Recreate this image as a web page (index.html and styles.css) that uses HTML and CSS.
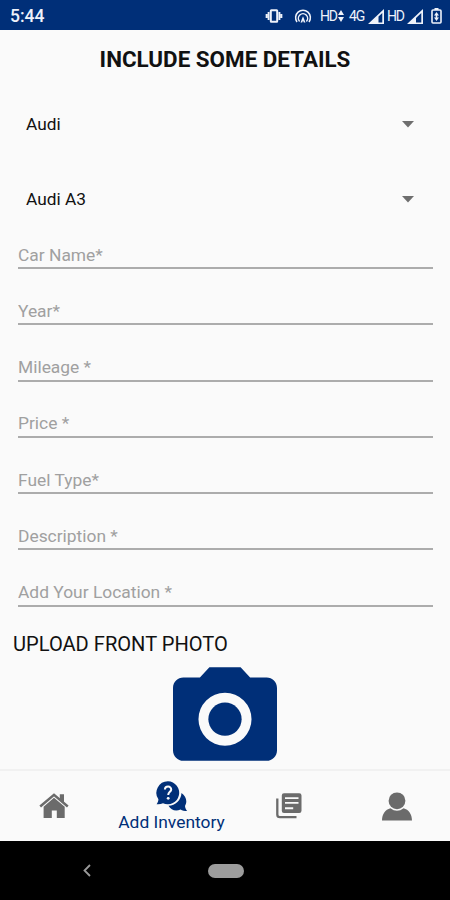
FILE: index.html
```html
<!DOCTYPE html>
<html lang="en">
<head>
    <meta charset="UTF-8">
    <meta name="viewport" content="width=device-width, initial-scale=1.0">
    <title>Add Inventory</title>
    <link rel="stylesheet" href="styles.css">
</head>
<body>

<header class="status-bar">
    <span class="clock">5:44</span>
    <div class="status-icons">
        <svg class="vibrate" width="18" height="14" viewBox="0 0 18 14">
            <rect x="5.8" y="1.2" width="6.4" height="11.6" rx=".5" fill="none" stroke="currentColor" stroke-width="2"/>
            <path d="M3.6 3v8M14.4 3v8M1.6 5v4M16.4 5v4" stroke="currentColor" stroke-width="1.9"/>
        </svg>
        <svg class="hotspot" width="18" height="15" viewBox="0 0 18 15">
            <g fill="none" stroke="currentColor" stroke-width="1.5">
                <path d="M3 13A7.4 7.4 0 1 1 15 13"/>
                <path d="M5.6 12.4A4.6 4.6 0 1 1 12.4 12.4"/>
            </g>
            <path d="M9 7.2L11.5 13.5H9.8L9 11.5L8.2 13.5H6.5z" fill="currentColor"/>
        </svg>
        <span class="hd">HD</span>
        <svg class="data" width="6" height="12" viewBox="0 0 6 12">
            <path d="M3 0L6 5H0zM3 12L0 7H6z" fill="currentColor"/>
        </svg>
        <span class="net">4G</span>
        <svg class="signal" width="16" height="15" viewBox="0 0 16 15">
            <path fill-rule="evenodd" d="M16 0V15H0zM14.3 4L10.5 7.6V13.4H14.3z" fill="currentColor"/>
        </svg>
        <span class="hd hd-second">HD</span>
        <svg class="signal-second" width="16" height="15" viewBox="0 0 16 15">
            <path fill-rule="evenodd" d="M16 0V15H0zM14.3 4L9 9V13.4H14.3z" fill="currentColor"/>
        </svg>
        <svg class="battery" width="11" height="16" viewBox="0 0 11 16">
            <path d="M3.5 0h4v2h-4z" fill="currentColor"/>
            <rect x="1" y="2" width="9" height="13" rx="1" fill="none" stroke="currentColor" stroke-width="1.6"/>
            <path d="M5.5 4L8 7.5H3zM5.5 13L3 9.5H8zM4.7 6h1.6v5H4.7z" fill="currentColor"/>
        </svg>
    </div>
</header>

<main>
    <h1>INCLUDE SOME DETAILS</h1>

    <form>
        <div class="select-row">
            <span>Audi</span>
            <svg width="12" height="7" viewBox="0 0 12 7"><path d="M0 0H12L6 6.5z" fill="currentColor"/></svg>
        </div>
        <div class="select-row">
            <span>Audi A3</span>
            <svg width="12" height="7" viewBox="0 0 12 7"><path d="M0 0H12L6 6.5z" fill="currentColor"/></svg>
        </div>

        <div class="fields">
            <input type="text" placeholder="Car Name*">
            <input type="text" placeholder="Year*">
            <input type="text" placeholder="Mileage *">
            <input type="text" placeholder="Price *">
            <input type="text" placeholder="Fuel Type*">
            <input type="text" placeholder="Description *">
            <input type="text" placeholder="Add Your Location *">
        </div>

        <h2>UPLOAD FRONT PHOTO</h2>
        <svg class="camera" viewBox="2 2 20 18">
            <path fill-rule="evenodd" d="M9 2L7.17 4H4c-1.1 0-2 .9-2 2v12c0 1.1.9 2 2 2h16c1.1 0 2-.9 2-2V6c0-1.1-.9-2-2-2h-3.17L15 2H9zm3 15.1a5.1 5.1 0 1 1 0-10.2 5.1 5.1 0 0 1 0 10.2z" fill="currentColor"/>
            <circle cx="12" cy="12" r="3.2" fill="currentColor"/>
        </svg>
    </form>
</main>

<nav class="tab-bar">
    <a class="tab">
        <svg width="30" height="26" viewBox="0 0 30 26">
            <path d="M20.8 1.3H25V10L20.8 6.4z" fill="currentColor"/>
            <path d="M1.2 13.5L15 1.9L28.8 13.5" fill="none" stroke="currentColor" stroke-width="2.5"/>
            <path d="M15 4.7L25.7 13.7V25H17.8V17.5H12.8V25H4.6V13.7z" fill="currentColor"/>
        </svg>
    </a>
    <a class="tab active">
        <svg width="32" height="31" viewBox="0 0 32 31">
            <path d="M25.5 12C28.5 14 30.3 17 30.3 20.3C30.3 22 29.8 23.6 29 25C29.2 27 30 28.8 31.2 30C28.5 30 26.3 29.5 24.5 28.4C19.5 30.8 15 28.8 12.5 24.7C19.5 24.5 25 19.5 25.5 12z" fill="currentColor"/>
            <path d="M12 .3A11.5 11.5 0 1 1 7 22.3C5 23.3 3 23.5 .6 23.3C1.8 21.8 2.4 20 2.4 18.3A11.5 11.5 0 0 1 12 .3z" fill="currentColor"/>
            <path d="M8.9 8.6C9 4.5 15.4 4.7 15.2 8.6C15.1 10.8 12.2 11 12.2 14" fill="none" stroke="#fafafa" stroke-width="2"/>
            <circle cx="12.2" cy="17.3" r="1.4" fill="#fafafa"/>
        </svg>
        <span>Add Inventory</span>
    </a>
    <a class="tab">
        <svg width="26" height="26" viewBox="0 0 26 26">
            <path d="M1.3 5.5V21.5Q1.3 24.2 4 24.2H20.5" fill="none" stroke="currentColor" stroke-width="2.3"/>
            <path fill-rule="evenodd" d="M8 .2H23.3Q25.5 .2 25.5 2.4V17.8Q25.5 20 23.3 20H8Q5.8 20 5.8 17.8V2.4Q5.8 .2 8 .2zM9 4.2V6H22.5V4.2zM9 8.9V10.7H22.5V8.9zM9 14.2V16.2H17.2V14.2z" fill="currentColor"/>
        </svg>
    </a>
    <a class="tab">
        <svg width="30" height="29" viewBox="0 0 30 29">
            <circle cx="15" cy="8.8" r="8.4" fill="currentColor"/>
            <path d="M0 28.5C0 22 3.3 17.5 8.4 16.2Q15 21.2 21.6 16.2C26.7 17.5 30 22 30 28.5z" fill="currentColor"/>
        </svg>
    </a>
</nav>

<footer class="system-bar">
    <svg width="8" height="13" viewBox="0 0 8 13">
        <path d="M7 1L1.5 6.5L7 12" fill="none" stroke="currentColor" stroke-width="1.8"/>
    </svg>
    <div class="home-pill"></div>
</footer>

</body>
</html>
```

FILE: styles.css
```css
:root {
    --primary-color: #002f78;
    --background-color: #fafafa;
    --icon-color: #6b6b6b;
    --hint-color: #a0a0a0;
}

* {
    margin: 0;
    padding: 0;
    box-sizing: border-box;
}

body {
    height: 900px;
    display: flex;
    flex-direction: column;
    overflow: hidden;
    font-family: Roboto, 'Liberation Sans', sans-serif;
    color: #111;
    background-color: var(--background-color);
}

svg {
    display: block;
    flex: none;
}

/* Status bar */
.status-bar {
    height: 30px;
    padding: 2px 8px 0 10px;
    display: flex;
    justify-content: space-between;
    align-items: center;
    color: #eef2fa;
    background-color: var(--primary-color);
}

.clock {
    font-size: 17.5px;
    font-weight: 500;
}

.status-icons {
    display: flex;
    align-items: center;
    font-size: 14px;
    line-height: 16px;
}

.hotspot {
    margin-left: 11px;
}

.hd,
.net {
    width: 16px;
    margin-left: 8px;
    letter-spacing: -1.2px;
}

.data {
    margin-left: 2px;
}

.net {
    width: 17px;
    margin-left: 5px;
    letter-spacing: -1px;
}

.signal {
    margin-left: 2px;
}

.hd-second {
    margin-left: 3px;
}

.signal-second {
    margin-left: 4px;
}

.battery {
    margin-left: 8px;
}

/* Form */
main {
    height: 739px;
}

h1 {
    padding-top: 15px;
    font-size: 22.4px;
    line-height: 28px;
    font-weight: 700;
    text-align: center;
}

form {
    padding-top: 13px;
}

.select-row {
    height: 75px;
    padding: 0 36px 0 26px;
    display: flex;
    justify-content: space-between;
    align-items: center;
    font-size: 17.3px;
}

.select-row svg {
    margin-top: 2px;
    color: #6e6e6e;
}

.fields {
    margin: -2px 17px 0 18px;
    display: grid;
    grid-template-rows: 35px repeat(6, 56.25px);
}

.fields input {
    width: 100%;
    align-self: end;
    height: 27px;
    border: none;
    border-bottom: 2px solid #acacac;
    background: none;
    font-family: inherit;
    font-size: 17.4px;
    outline: none;
}

.fields input::placeholder {
    color: var(--hint-color);
}

h2 {
    padding: 24px 0 0 13px;
    font-size: 20.1px;
    line-height: 26px;
    font-weight: 400;
}

.camera {
    width: 104px;
    height: 94px;
    margin: 10px auto 0;
    color: var(--primary-color);
}

/* Bottom navigation */
.tab-bar {
    height: 72px;
    display: grid;
    grid-template-columns: 108px 127px 108px 107px;
    border-top: 2px solid #f1f1f1;
}

.tab {
    display: flex;
    flex-direction: column;
    justify-content: center;
    align-items: center;
    color: var(--icon-color);
}

.tab.active {
    color: var(--primary-color);
}

.tab span {
    font-size: 17.4px;
    line-height: 20px;
    white-space: nowrap;
}

/* System bar */
.system-bar {
    height: 59px;
    padding-left: 83px;
    display: flex;
    align-items: center;
    color: #9a9a9a;
    background-color: #000;
}

.home-pill {
    width: 36px;
    height: 14px;
    margin-left: 117px;
    border-radius: 7px;
    background-color: #9c9c9c;
}
```
